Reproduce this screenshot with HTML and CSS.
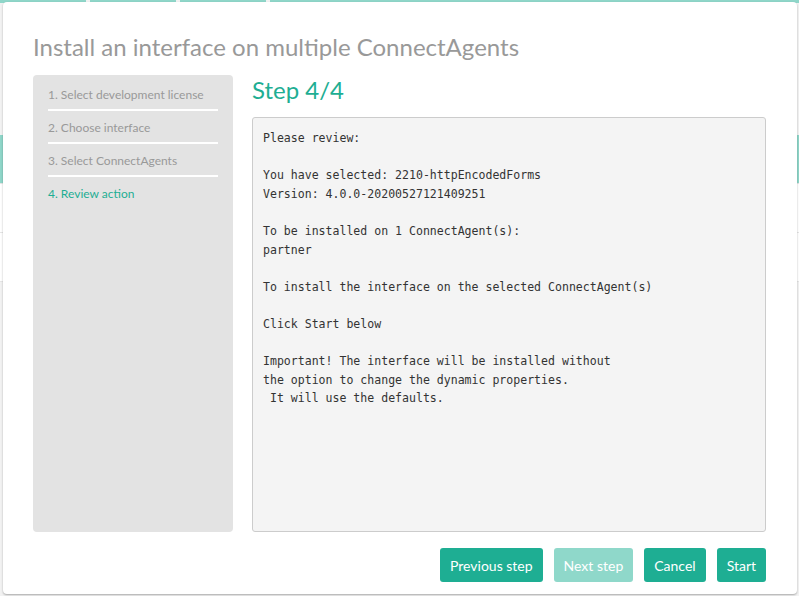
FILE: index.html
```
<!DOCTYPE html>
<html lang="en">
<head>
  <meta charset="UTF-8">
  <meta name="viewport" content="width=device-width, initial-scale=1.0">
  <title>Install interface</title>
  <link rel="stylesheet" href="styles.css">
</head>
<body>

  <div class="page">
    <div class="tabs">
      <span class="tab"></span>
      <span class="tab"></span>
      <span class="tab"></span>
      <span class="tab wide"></span>
    </div>
    <div class="rows">
      <div class="row active"></div>
      <div class="row"></div>
      <div class="row"></div>
    </div>
  </div>

  <div class="modal">
    <h1 class="modal-title">Install an interface on multiple ConnectAgents</h1>

    <div class="modal-body">
      <ul class="steps">
        <li class="step">1. Select development license</li>
        <li class="step">2. Choose interface</li>
        <li class="step">3. Select ConnectAgents</li>
        <li class="step current">4. Review action</li>
      </ul>

      <div class="content">
        <h2 class="step-title">Step 4/4</h2>
        <pre class="review">Please review:

You have selected: 2210-httpEncodedForms
Version: 4.0.0-20200527121409251

To be installed on 1 ConnectAgent(s):
partner

To install the interface on the selected ConnectAgent(s)

Click Start below

Important! The interface will be installed without
the option to change the dynamic properties.
 It will use the defaults.</pre>
      </div>
    </div>

    <div class="modal-footer">
      <button class="btn">Previous step</button>
      <button class="btn" disabled>Next step</button>
      <button class="btn">Cancel</button>
      <button class="btn">Start</button>
    </div>
  </div>

</body>
</html>
```
FILE: styles.css
```
body {
  margin: 0;
  font-family: Lato, "Open Sans", sans-serif;
  background-color: #f2f2f2;
  height: 596px;
  overflow: hidden;
}
.page {
  height: 596px;
}
.tabs {
  display: flex;
  gap: 4px;
  height: 3px;
}
.tab {
  width: 86px;
  background-color: #8fd6c9;
}
.tab.wide {
  flex: 1;
}
.rows {
  padding-top: 132px;
}
.row {
  height: 48px;
  background-color: #ffffff;
  border-bottom: 1px solid #e6e6e6;
}
.row.active {
  background-color: #8fd6c9;
}
.modal {
  position: absolute;
  top: 2px;
  left: 3px;
  width: 794px;
  height: 592px;
  background-color: #ffffff;
  border-radius: 4px;
  box-shadow: 0 1px 2px rgba(0, 0, 0, 0.3);
  display: flex;
  flex-direction: column;
  padding: 30px 31px 12px 30px;
  box-sizing: border-box;
}
.modal-title {
  margin: 0;
  font-size: 24px;
  line-height: 30px;
  font-weight: normal;
  color: #999999;
}
.modal-body {
  display: flex;
  gap: 19px;
  margin-top: 13px;
  height: 457px;
}
.steps {
  list-style: none;
  margin: 0;
  padding: 3px 15px 0;
  width: 200px;
  box-sizing: border-box;
  background-color: #e3e3e3;
  border-radius: 4px;
}
.step {
  font-size: 12px;
  line-height: 16px;
  padding: 9px 0 6px;
  color: #999999;
  border-bottom: 2px solid #ffffff;
}
.step.current {
  color: #1eae93;
  border-bottom: none;
}
.content {
  flex: 1;
  display: flex;
  flex-direction: column;
}
.step-title {
  margin: 0;
  font-size: 24px;
  line-height: 30px;
  font-weight: normal;
  color: #1eae93;
}
.review {
  flex: 1;
  margin: 12px 0 0;
  padding: 11px 10px 7px;
  background-color: #f4f4f4;
  border: 1px solid #cccccc;
  border-radius: 3px;
  font-family: "DejaVu Sans Mono", monospace;
  font-size: 11.55px;
  line-height: 18.6px;
  color: #333333;
  white-space: pre-wrap;
}
.modal-footer {
  display: flex;
  justify-content: flex-end;
  gap: 11px;
  margin-top: 16px;
}
.btn {
  height: 34px;
  padding: 0 10px;
  border: none;
  border-radius: 3px;
  background-color: #1eae93;
  color: #ffffff;
  font-family: Lato, sans-serif;
  font-size: 14px;
  cursor: pointer;
}
.btn:disabled {
  background-color: #8fd8ca;
  cursor: default;
}
```
